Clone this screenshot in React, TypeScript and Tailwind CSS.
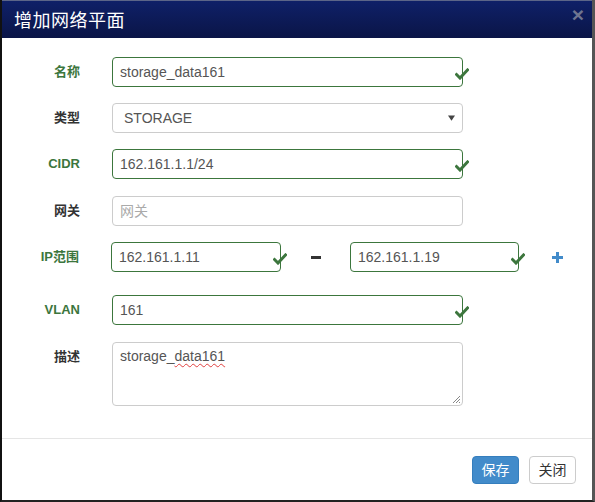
import React from "react";

const GREEN = "#3c763d";

function Check() {
  return (
    <svg
      aria-hidden
      viewBox="0 0 14 12"
      className="pointer-events-none absolute right-[-6px] top-[11px] h-[12px] w-[14px]"
    >
      <path d="M1.5 6.5 L5 10 L12.5 2" fill="none" stroke={GREEN} strokeWidth="3" strokeLinecap="square" />
    </svg>
  );
}

function Field({
  value,
  placeholder,
  ok = false,
  className = "w-[351px]",
}: {
  value?: string;
  placeholder?: string;
  ok?: boolean;
  className?: string;
}) {
  return (
    <div className={`relative h-[30px] ${className}`}>
      <div
        className={`flex h-full items-center rounded-[4px] border bg-white px-[7px] text-[14px] ${
          ok ? "border-[#3c763d]" : "border-[#ccc]"
        }`}
      >
        {value ? <span className="text-[#555]">{value}</span> : <span className="text-[#aaa]">{placeholder}</span>}
      </div>
      {ok && <Check />}
    </div>
  );
}

function Row({ label, ok = false, top, children }: { label: string; ok?: boolean; top: string; children: React.ReactNode }) {
  return (
    <div className={`flex items-start ${top}`}>
      <div
        className={`flex h-[30px] w-[78px] items-center justify-end text-[13px] font-bold ${
          ok ? "text-[#3c763d]" : "text-[#333]"
        }`}
      >
        {label}
      </div>
      <div className="ml-[32px] flex items-start">{children}</div>
    </div>
  );
}

export default function App() {
  return (
    <div
      className="flex h-[502px] w-[595px] flex-col border-b-2 border-l-2 border-r-[3px] border-b-[#222] border-l-[#111] border-r-[#555] bg-white"
      style={{ fontFamily: '"Liberation Sans", "Noto Sans CJK SC", Arial, sans-serif' }}
    >
      <div className="relative flex h-[38px] shrink-0 items-center border-t border-t-[#5c6588] bg-gradient-to-b from-[#0f2068] to-[#0a1547] pl-[12px]">
        <h1 className="text-[18px] font-normal tracking-[0.5px] text-white" style={{ fontFamily: '"Noto Sans CJK SC", sans-serif' }}>
          增加网络平面
        </h1>
        <span className="absolute right-[8px] top-[3px] text-[21px] font-bold leading-none text-[#6f7590]">×</span>
      </div>

      <div className="flex-1">
        <Row label="名称" ok top="mt-[19px]">
          <Field value="storage_data161" ok />
        </Row>

        <Row label="类型" top="mt-[16px]">
          <div className="flex h-[30px] w-[351px] items-center justify-between rounded-[4px] border border-[#ccc] bg-white pl-[11px] pr-[7px] text-[14px] text-[#555]">
            <span>STORAGE</span>
            <svg viewBox="0 0 8 6" className="h-[6px] w-[7px]">
              <path d="M0 0 H8 L4 6 Z" fill="#444" />
            </svg>
          </div>
        </Row>

        <Row label="CIDR" ok top="mt-[16px]">
          <Field value="162.161.1.1/24" ok />
        </Row>

        <Row label="网关" top="mt-[17px]">
          <Field placeholder="网关" />
        </Row>

        <Row label="IP范围" ok top="mt-[16px]">
          <Field value="162.161.1.11" ok className="w-[170px]" />
          <div className="flex h-[30px] w-[69px] items-center justify-center">
            <span className="h-[3px] w-[10px] bg-[#333]" />
          </div>
          <Field value="162.161.1.19" ok className="w-[169px]" />
          <div className="flex h-[30px] w-[73px] items-center justify-center pl-[4px]">
            <svg viewBox="0 0 11 11" className="h-[11px] w-[11px]">
              <path d="M4 0 H7 V4 H11 V7 H7 V11 H4 V7 H0 V4 H4 Z" fill="#428bca" />
            </svg>
          </div>
        </Row>

        <Row label="VLAN" ok top="mt-[23px]">
          <Field value="161" ok />
        </Row>

        <Row label="描述" top="mt-[17px]">
          <div className="relative h-[64px] w-[351px] rounded-[4px] border border-[#ccc] bg-white px-[7px] pt-[3px] text-[14px] text-[#555]">
            storage_
            <span className="underline decoration-[#e04040] decoration-wavy decoration-1 underline-offset-2">data161</span>
            <svg viewBox="0 0 8 8" className="absolute bottom-[2px] right-[2px] h-[8px] w-[8px]">
              <path d="M1 8 L8 1 M4 8 L8 4 M7 8 L8 7" stroke="#888" strokeWidth="1" />
            </svg>
          </div>
        </Row>
      </div>

      <div className="flex h-[62px] shrink-0 items-start justify-end gap-[10px] border-t border-t-[#e5e5e5] pr-[16px] pt-[17px]">
        <button className="h-[28px] w-[47px] rounded-[4px] border border-[#357ebd] bg-[#428bca] text-[14px] text-white">保存</button>
        <button className="h-[28px] w-[47px] rounded-[4px] border border-[#ccc] bg-white text-[14px] text-[#333]">关闭</button>
      </div>
    </div>
  );
}
